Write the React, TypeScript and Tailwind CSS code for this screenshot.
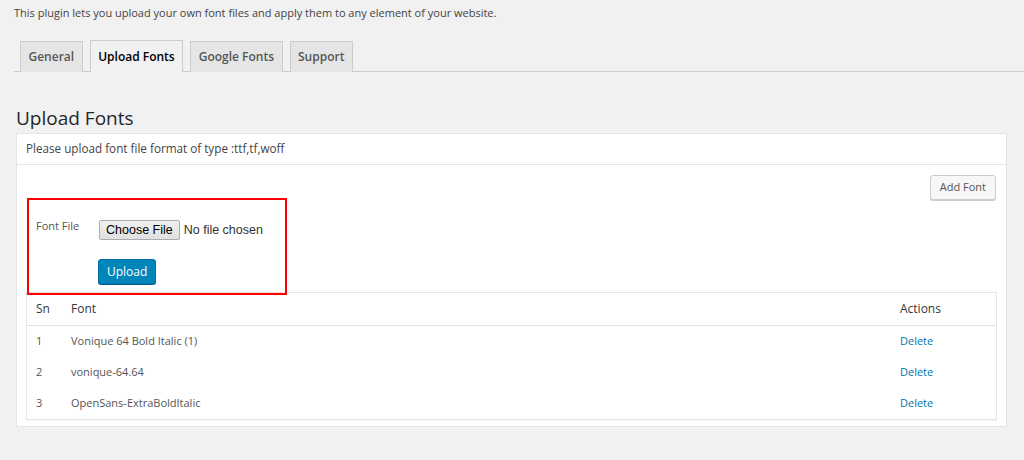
const fonts = [
  { sn: 1, name: 'Vonique 64 Bold Italic (1)' },
  { sn: 2, name: 'vonique-64.64' },
  { sn: 3, name: 'OpenSans-ExtraBoldItalic' },
]

const tabs = ['General', 'Upload Fonts', 'Google Fonts', 'Support']

export default function App() {
  return (
    <div
      className="w-[1024px] h-[460px] overflow-hidden bg-[#f1f1f1] text-[#444] pl-[14px] pr-[17px]"
      style={{ fontFamily: '"Open Sans", "Noto Sans", sans-serif' }}
    >
      <p className="text-[11px] leading-[16px] pt-[5px]">
        This plugin lets you upload your own font files and apply them to any element of your website.
      </p>

      {/* Tabs */}
      <div className="mt-[19px] flex items-end gap-[7px] pl-[6px] border-b border-[#ccc] -mr-[17px]">
        {tabs.map(t => (
          <div
            key={t}
            className={`h-[31px] px-[7.5px] flex items-center text-[12px] font-semibold border border-[#ccc] border-b-0 -mb-px ${
              t === 'Upload Fonts' ? 'bg-[#f1f1f1] text-black h-[32px] border-b border-b-[#f1f1f1]' : 'bg-[#e5e5e5] text-[#555]'
            }`}
          >
            {t}
          </div>
        ))}
      </div>

      <h1 className="mt-[32px] ml-[2px] text-[19px] leading-[28px] text-[#23282d]">Upload Fonts</h1>

      <div className="mt-[1px] ml-[2px] bg-white border border-[#e5e5e5] h-[294px]">
        <div className="h-[31px] px-[9px] flex items-center text-[11.7px] text-[#444] border-b border-[#e5e5e5]">
          Please upload font file format of type :ttf,tf,woff
        </div>

        <div className="px-[9px]">
          <div className="flex justify-end pt-[10px] pr-[1px]">
            <button className="h-[25px] px-[9px] text-[11px] text-[#555] bg-[#f7f7f7] border border-[#ccc] rounded-[3px] shadow-[0_1px_0_#ccc]">
              Add Font
            </button>
          </div>

          {/* highlighted upload form */}
          <div className="relative z-10 -mt-[2px] ml-[1px] w-[260px] h-[97px] border-2 border-[#f00] -mb-[3px] pl-[7px] pt-[17px]">
            <div className="flex items-start">
              <span className="text-[11px] text-[#555] w-[63px] pt-[1px]">Font File</span>
              <div className="flex items-center pt-[3px]">
                <span
                  className="h-[20px] px-[6px] flex items-center text-[12.5px] text-black bg-gradient-to-b from-[#f0f0f0] to-[#e0e0e0] border border-[#adadad] rounded-[2px]"
                  style={{ fontFamily: '"Liberation Sans", Arial, sans-serif' }}
                >
                  Choose File
                </span>
                <span
                  className="ml-[4px] text-[12.5px] text-[#333]"
                  style={{ fontFamily: '"Liberation Sans", Arial, sans-serif' }}
                >
                  No file chosen
                </span>
              </div>
            </div>
            <button className="ml-[62px] mt-[19px] h-[25px] px-[8px] text-[12px] text-white bg-[#0085ba] border border-[#0073aa] rounded-[3px] shadow-[0_1px_0_#006799]">
              Upload
            </button>
          </div>

          <div className="border border-[#e5e5e5] shadow-[0_1px_1px_rgba(0,0,0,0.04)]">
            <div className="h-[33px] flex items-center text-[12px] text-[#32373c] border-b border-[#e1e1e1]">
              <span className="w-[44px] pl-[9px]">Sn</span>
              <span className="flex-1">Font</span>
              <span className="w-[96px]">Actions</span>
            </div>
            {fonts.map(f => (
              <div key={f.sn} className="h-[31px] flex items-center text-[11px] text-[#555]">
                <span className="w-[44px] pl-[9px]">{f.sn}</span>
                <span className="flex-1">{f.name}</span>
                <span className="w-[96px] text-[#0073aa]">Delete</span>
              </div>
            ))}
          </div>
        </div>
      </div>
    </div>
  )
}
